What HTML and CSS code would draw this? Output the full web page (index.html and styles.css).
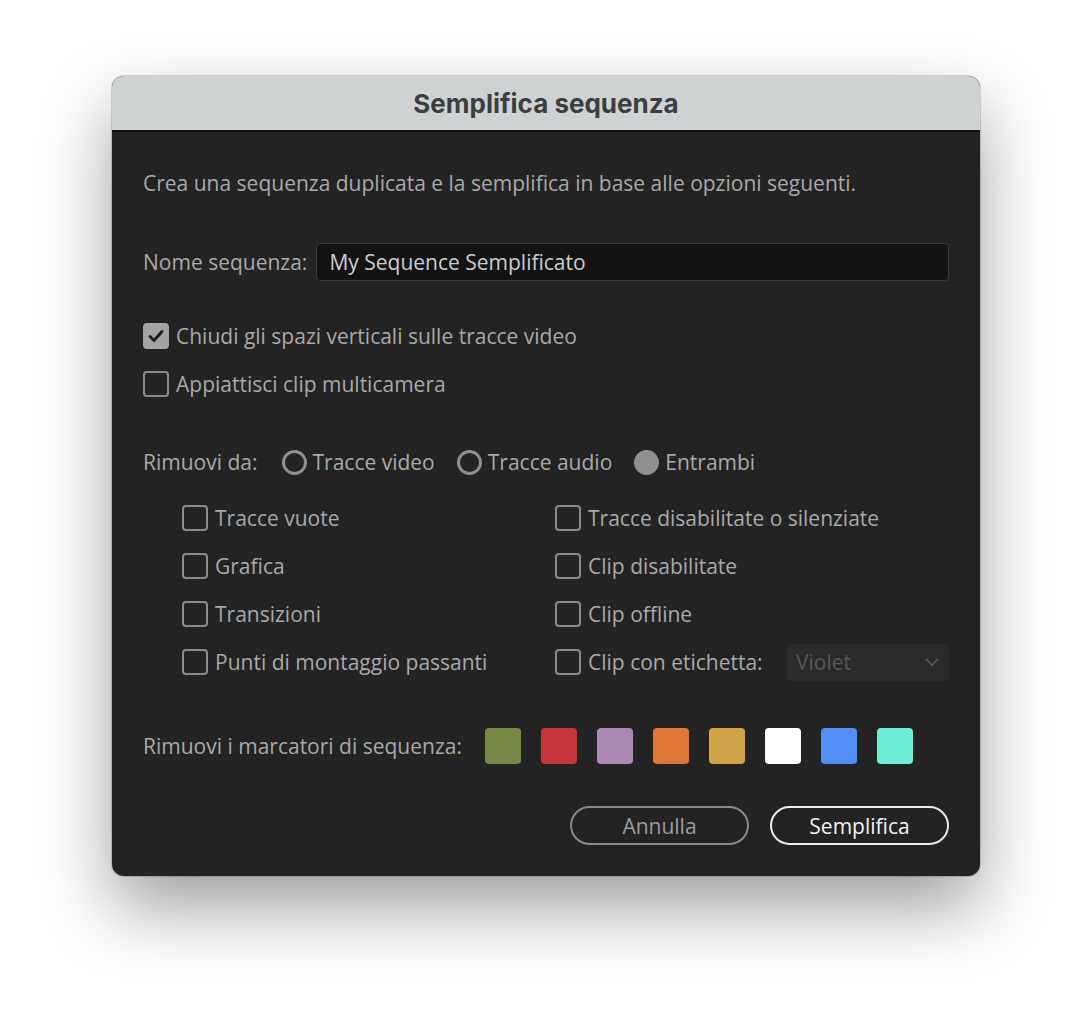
FILE: index.html
```html
<!DOCTYPE html>
<html lang="it">
<head>
<meta charset="utf-8">
<title>Semplifica sequenza</title>
<link rel="stylesheet" href="styles.css">
</head>
<body>
<div class="window">
  <div class="titlebar">Semplifica sequenza</div>
  <div class="content">
    <p class="desc">Crea una sequenza duplicata e la semplifica in base alle opzioni seguenti.</p>
    <div class="name-row">
      <span class="label">Nome sequenza:</span>
      <div class="input">My Sequence Semplificato</div>
    </div>
    <div class="checks">
      <div class="check-row"><span class="cb checked"><svg viewBox="0 0 26 26"><polyline points="7,13.5 11,17.5 19,8.5" /></svg></span><span class="label">Chiudi gli spazi verticali sulle tracce video</span></div>
      <div class="check-row"><span class="cb"></span><span class="label">Appiattisci clip multicamera</span></div>
    </div>
    <div class="radio-row">
      <span class="label rlabel">Rimuovi da:</span>
      <span class="radio-item"><span class="rb"></span><span class="label">Tracce video</span></span>
      <span class="radio-item"><span class="rb"></span><span class="label">Tracce audio</span></span>
      <span class="radio-item"><span class="rb on"></span><span class="label">Entrambi</span></span>
    </div>
    <div class="grid">
      <div class="check-row"><span class="cb"></span><span class="label">Tracce vuote</span></div>
      <div class="check-row"><span class="cb"></span><span class="label">Tracce disabilitate o silenziate</span></div>
      <div class="check-row"><span class="cb"></span><span class="label">Grafica</span></div>
      <div class="check-row"><span class="cb"></span><span class="label">Clip disabilitate</span></div>
      <div class="check-row"><span class="cb"></span><span class="label">Transizioni</span></div>
      <div class="check-row"><span class="cb"></span><span class="label">Clip offline</span></div>
      <div class="check-row"><span class="cb"></span><span class="label">Punti di montaggio passanti</span></div>
      <div class="check-row"><span class="cb"></span><span class="label">Clip con etichetta:</span>
        <div class="select"><span>Violet</span><svg viewBox="0 0 14 8"><polyline points="1,1 7,7 13,1" /></svg></div>
      </div>
    </div>
    <div class="markers">
      <span class="label">Rimuovi i marcatori di sequenza:</span>
      <div class="swatches">
        <span class="sw c1"></span><span class="sw c2"></span><span class="sw c3"></span><span class="sw c4"></span>
        <span class="sw c5"></span><span class="sw c6"></span><span class="sw c7"></span><span class="sw c8"></span>
      </div>
    </div>
    <div class="buttons">
      <button class="btn cancel">Annulla</button>
      <button class="btn primary">Semplifica</button>
    </div>
  </div>
</div>
</body>
</html>
```
FILE: styles.css
```css
html, body {
  margin: 0;
  background: #ffffff;
}
body {
  min-height: 1024px;
  box-sizing: border-box;
  padding: 76px 0 0 112px;
  font-family: "Open Sans", Lato, sans-serif;
  font-size: 21px;
  color: #a9a9a9;
}
.window {
  width: 868px;
  height: 800px;
  box-sizing: border-box;
  border-radius: 12px;
  overflow: hidden;
  background: #232323;
  box-shadow: 0 32px 70px rgba(0,0,0,0.38), 0 0 0 1px rgba(0,0,0,0.15);
  display: flex;
  flex-direction: column;
}
.titlebar {
  height: 54px;
  background: #cfd2d3;
  border-bottom: 2px solid #111;
  display: flex;
  align-items: center;
  justify-content: center;
  font-family: Inter, "Liberation Sans", sans-serif;
  font-weight: 700;
  font-size: 26px;
  color: #3b3e40;
}
.content {
  padding: 37px 31px 0 31px;
  display: flex;
  flex-direction: column;
}
.desc {
  margin: 0;
  line-height: 28px;
}
.label {
  white-space: nowrap;
  line-height: 28px;
}
.name-row {
  margin-top: 46px;
  display: flex;
  align-items: center;
  gap: 9px;
}
.input {
  flex: 1;
  height: 38px;
  box-sizing: border-box;
  background: #131313;
  border: 1px solid #3a3a3a;
  border-radius: 4px;
  padding: 0 12px;
  display: flex;
  align-items: center;
  color: #cdcdcd;
}
.checks {
  margin-top: 41px;
  display: flex;
  flex-direction: column;
  gap: 20px;
}
.check-row {
  display: flex;
  align-items: center;
  gap: 7px;
  height: 28px;
}
.cb {
  width: 26px;
  height: 26px;
  box-sizing: border-box;
  border: 2px solid #8c8c8c;
  border-radius: 4px;
  flex: none;
  display: flex;
}
.cb.checked {
  background: #a3a3a3;
  border-color: #a3a3a3;
}
.cb svg {
  width: 26px;
  height: 26px;
  margin: -2px;
}
.cb svg polyline {
  fill: none;
  stroke: #1e1e1e;
  stroke-width: 3;
  stroke-linecap: round;
  stroke-linejoin: round;
}
.radio-row {
  margin-top: 50px;
  display: flex;
  align-items: center;
  height: 28px;
}
.rlabel {
  margin-right: 24px;
}
.radio-item {
  display: flex;
  align-items: center;
  gap: 6px;
  margin-right: 22px;
}
.rb {
  width: 25px;
  height: 25px;
  box-sizing: border-box;
  border: 3px solid #8f8f8f;
  border-radius: 50%;
  flex: none;
}
.rb.on {
  background: #8f8f8f;
}
.grid {
  margin-top: 28px;
  padding-left: 39px;
  display: grid;
  grid-template-columns: 373px 1fr;
  row-gap: 20px;
}
.select {
  margin-left: auto;
  width: 163px;
  height: 37px;
  box-sizing: border-box;
  background: #2a2a2a;
  border-radius: 4px;
  padding: 0 10px 0 10px;
  display: flex;
  align-items: center;
  justify-content: space-between;
  color: #575757;
}
.select svg {
  width: 14px;
  height: 8px;
}
.select polyline {
  fill: none;
  stroke: #5a5a5a;
  stroke-width: 1.6;
}
.markers {
  margin-top: 52px;
  display: flex;
  align-items: center;
  gap: 23px;
}
.swatches {
  display: flex;
  gap: 20px;
}
.sw {
  width: 36px;
  height: 36px;
  border-radius: 4px;
}
.c1 { background: #778844; }
.c2 { background: #c6373c; }
.c3 { background: #a98bb2; }
.c4 { background: #e07638; }
.c5 { background: #cfa346; }
.c6 { background: #ffffff; }
.c7 { background: #528ef5; }
.c8 { background: #6eefd5; }
.buttons {
  margin-top: 42px;
  display: flex;
  justify-content: flex-end;
  gap: 21px;
}
.btn {
  width: 179px;
  height: 39px;
  box-sizing: border-box;
  border-radius: 20px;
  background: transparent;
  font-family: "Open Sans", Lato, sans-serif;
  font-size: 21px;
  padding: 0;
  cursor: pointer;
}
.cancel {
  border: 2px solid #8a8a8a;
  color: #9d9d9d;
}
.primary {
  border: 2px solid #ececec;
  color: #f2f2f2;
}
```
